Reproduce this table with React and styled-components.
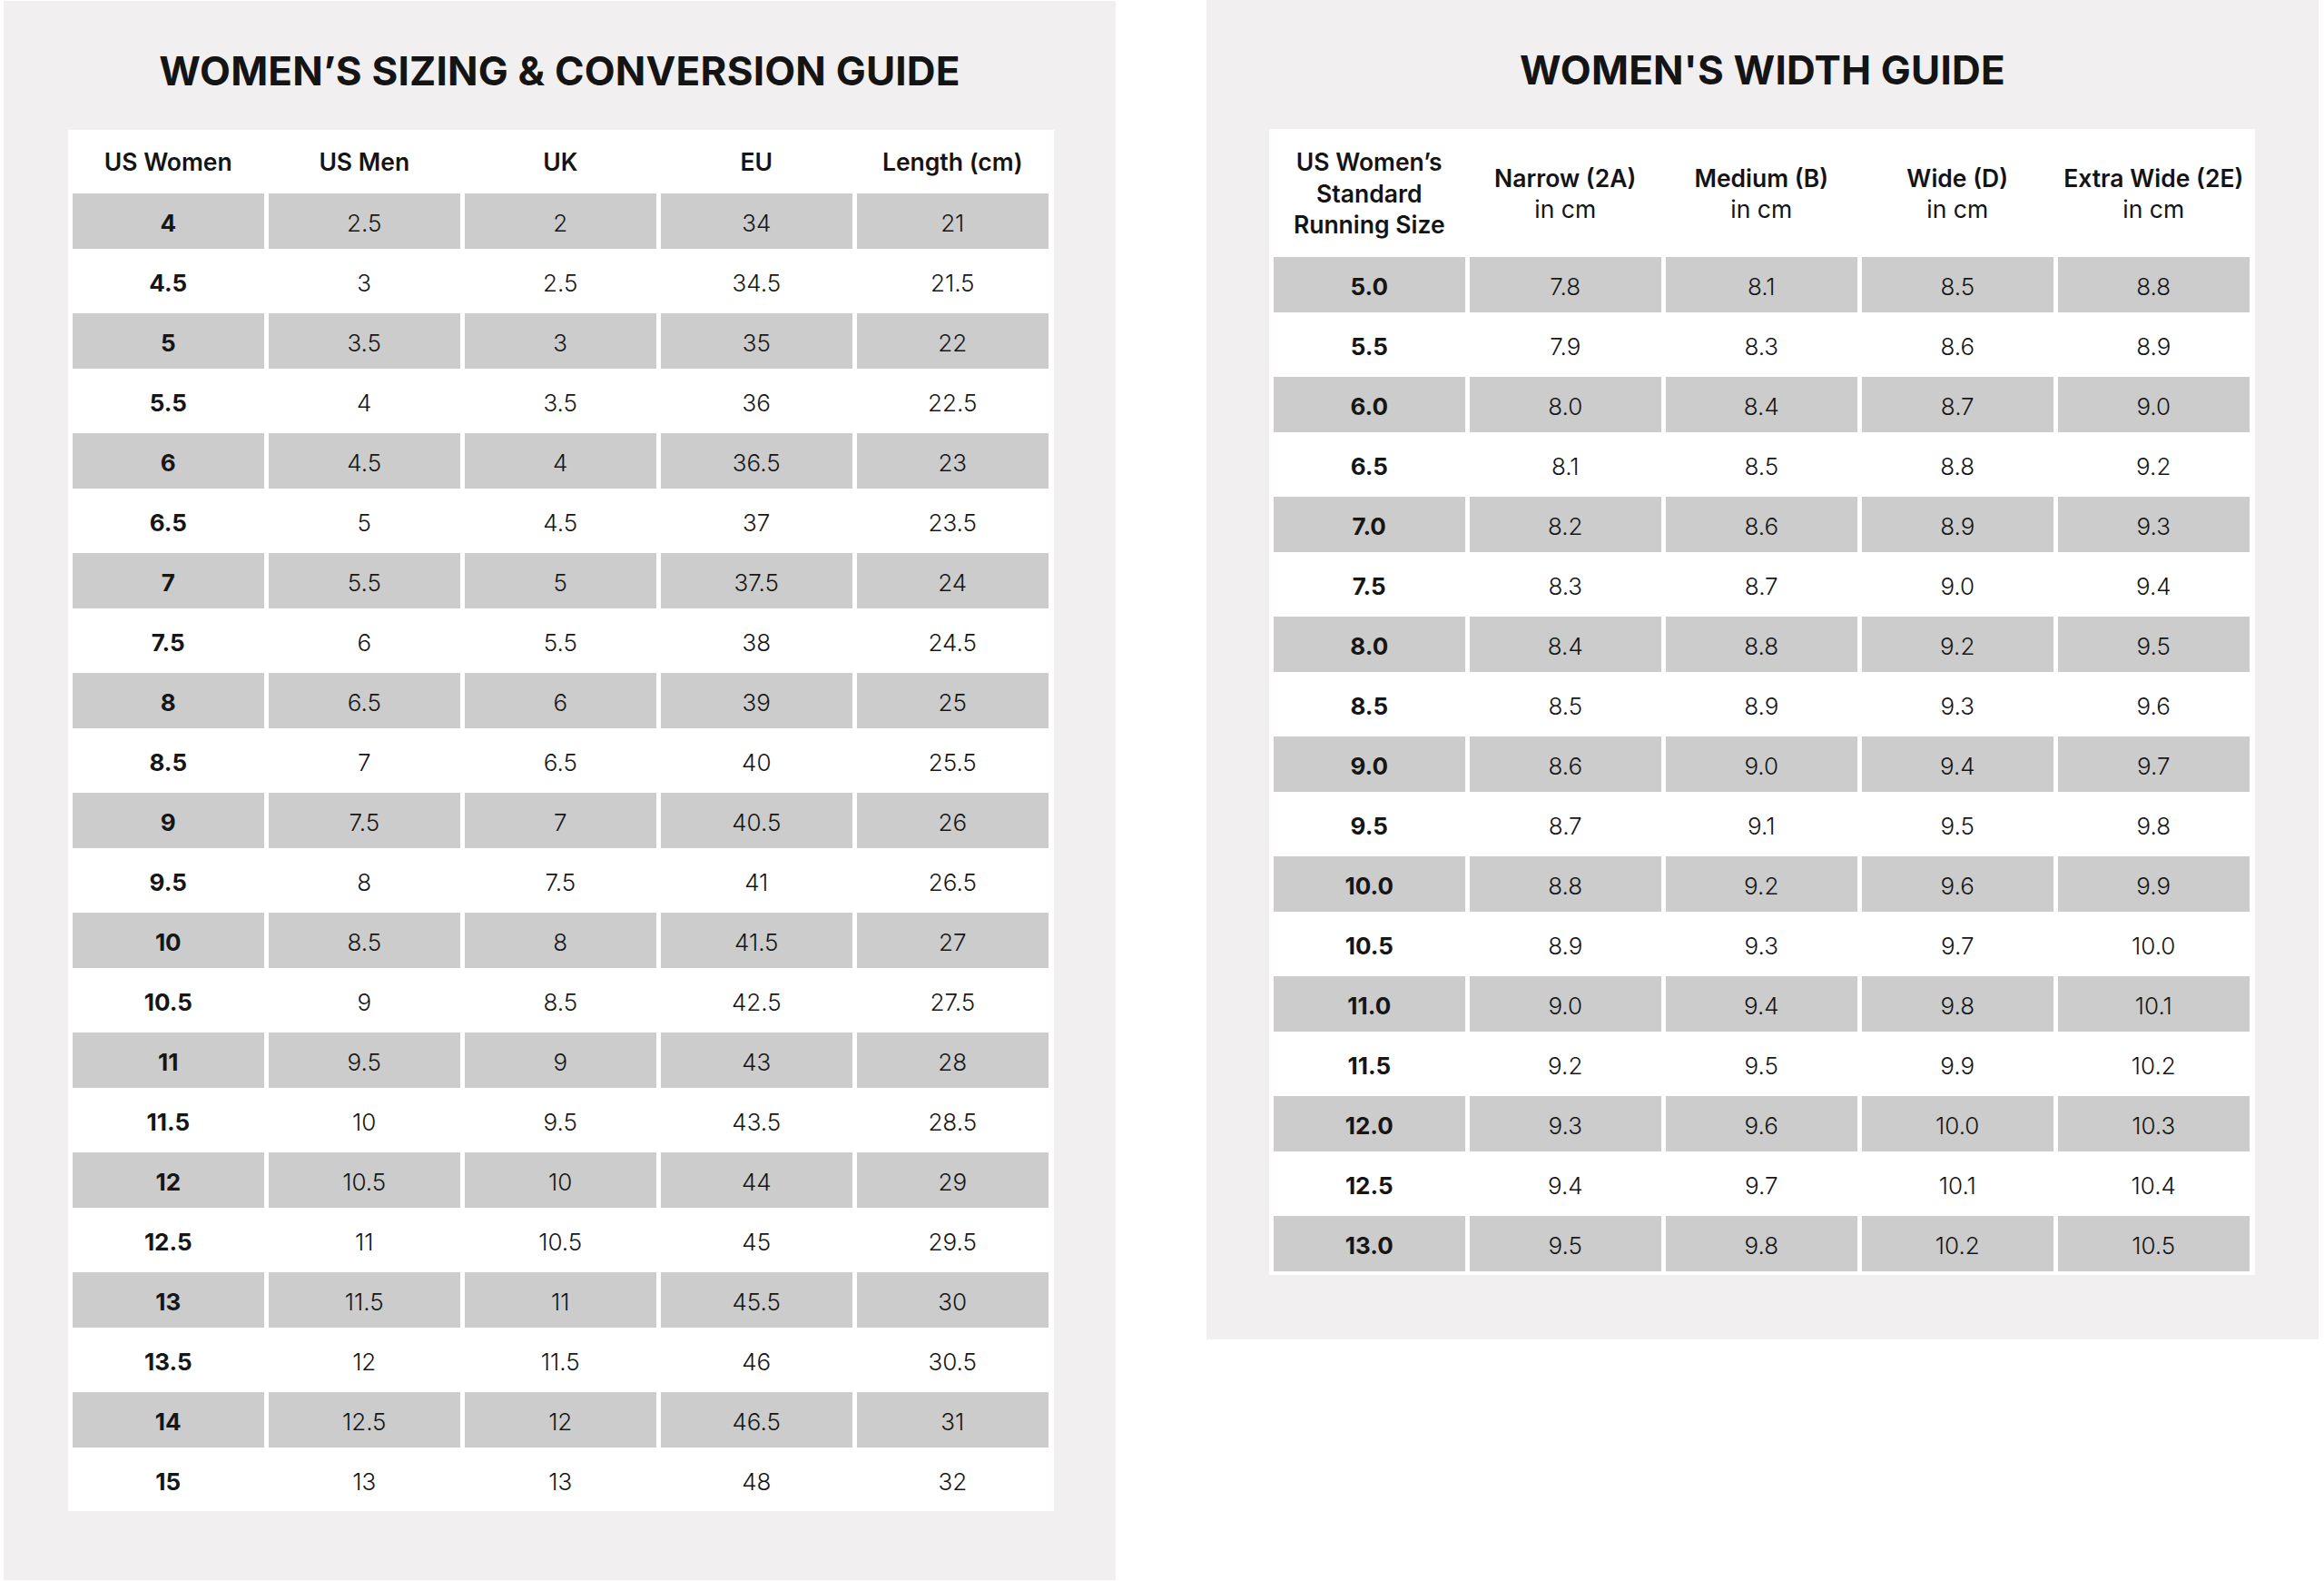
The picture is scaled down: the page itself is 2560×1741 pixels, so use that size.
import React from 'react'
import styled, { createGlobalStyle } from 'styled-components'

const GlobalStyle = createGlobalStyle`
  html, body {
    margin: 0;
    padding: 0;
    background: #ffffff;
  }
  body {
    font-family: Inter, "Open Sans", "Liberation Sans", sans-serif;
    color: #141414;
  }
`

const sizing = [
  ['4', '2.5', '2', '34', '21'],
  ['4.5', '3', '2.5', '34.5', '21.5'],
  ['5', '3.5', '3', '35', '22'],
  ['5.5', '4', '3.5', '36', '22.5'],
  ['6', '4.5', '4', '36.5', '23'],
  ['6.5', '5', '4.5', '37', '23.5'],
  ['7', '5.5', '5', '37.5', '24'],
  ['7.5', '6', '5.5', '38', '24.5'],
  ['8', '6.5', '6', '39', '25'],
  ['8.5', '7', '6.5', '40', '25.5'],
  ['9', '7.5', '7', '40.5', '26'],
  ['9.5', '8', '7.5', '41', '26.5'],
  ['10', '8.5', '8', '41.5', '27'],
  ['10.5', '9', '8.5', '42.5', '27.5'],
  ['11', '9.5', '9', '43', '28'],
  ['11.5', '10', '9.5', '43.5', '28.5'],
  ['12', '10.5', '10', '44', '29'],
  ['12.5', '11', '10.5', '45', '29.5'],
  ['13', '11.5', '11', '45.5', '30'],
  ['13.5', '12', '11.5', '46', '30.5'],
  ['14', '12.5', '12', '46.5', '31'],
  ['15', '13', '13', '48', '32'],
]

const widths = [
  ['5.0', '7.8', '8.1', '8.5', '8.8'],
  ['5.5', '7.9', '8.3', '8.6', '8.9'],
  ['6.0', '8.0', '8.4', '8.7', '9.0'],
  ['6.5', '8.1', '8.5', '8.8', '9.2'],
  ['7.0', '8.2', '8.6', '8.9', '9.3'],
  ['7.5', '8.3', '8.7', '9.0', '9.4'],
  ['8.0', '8.4', '8.8', '9.2', '9.5'],
  ['8.5', '8.5', '8.9', '9.3', '9.6'],
  ['9.0', '8.6', '9.0', '9.4', '9.7'],
  ['9.5', '8.7', '9.1', '9.5', '9.8'],
  ['10.0', '8.8', '9.2', '9.6', '9.9'],
  ['10.5', '8.9', '9.3', '9.7', '10.0'],
  ['11.0', '9.0', '9.4', '9.8', '10.1'],
  ['11.5', '9.2', '9.5', '9.9', '10.2'],
  ['12.0', '9.3', '9.6', '10.0', '10.3'],
  ['12.5', '9.4', '9.7', '10.1', '10.4'],
  ['13.0', '9.5', '9.8', '10.2', '10.5'],
]

const Page = styled.div`
  display: flex;
  align-items: flex-start;
  gap: 100px;
  padding-left: 4px;
`

const Panel = styled.section`
  width: 1225px;
  box-sizing: border-box;
  margin-top: ${(p) => p.$top}px;
  padding: 0 0 ${(p) => p.$bottom}px ${(p) => p.$left}px;
  background: #f2eff0;
`

const Title = styled.h1`
  margin: 0;
  height: 142px;
  box-sizing: border-box;
  padding-top: 55px;
  padding-right: ${(p) => p.$offset}px;
  font-size: 44px;
  line-height: 44px;
  font-weight: 700;
  text-align: center;
  color: #141414;
  letter-spacing: 0.2px;
`

const Card = styled.div`
  width: 1086px;
  box-sizing: border-box;
  background: #ffffff;
  padding: 0 5px 4px 5px;
  display: flex;
  flex-direction: column;
  gap: 5px;
`

const HeadRow = styled.div`
  display: grid;
  grid-template-columns: repeat(5, 210.5px);
  column-gap: 5.5px;
  height: ${(p) => p.$h}px;
  box-sizing: border-box;
  padding-top: ${(p) => p.$pt || 0}px;
`

const Body = styled.div`
  display: grid;
  grid-template-columns: repeat(5, 210.5px);
  grid-auto-rows: 61px;
  column-gap: 5.5px;
  row-gap: 5px;
`

const HeadCell = styled.div`
  display: flex;
  flex-direction: column;
  align-items: center;
  justify-content: center;
  text-align: center;
  font-size: 26.5px;
  line-height: 34.5px;
  font-weight: 600;
  color: #141414;
`

const Sub = styled.span`
  font-weight: 400;
`

const Cell = styled.div`
  display: flex;
  align-items: center;
  justify-content: center;
  padding-top: 3px;
  box-sizing: border-box;
  background: ${(p) => (p.$shade ? '#cccccc' : '#ffffff')};
  font-size: 26px;
  font-weight: ${(p) => (p.$bold ? 700 : 300)};
  color: #161616;
`

function DataRows({ rows }) {
  return (
    <Body>
      {rows.map((row, i) =>
        row.map((v, j) => (
          <Cell key={i + '-' + j} $shade={i % 2 === 0} $bold={j === 0}>
            {v}
          </Cell>
        ))
      )}
    </Body>
  )
}

export default function App() {
  return (
    <>
      <GlobalStyle />
      <Page>
        <Panel $top={1} $bottom={76} $left={71}>
          <Title $offset={71}>WOMEN’S SIZING &amp; CONVERSION GUIDE</Title>
          <Card>
            <HeadRow $h={65} $pt={6}>
              <HeadCell>US Women</HeadCell>
              <HeadCell>US Men</HeadCell>
              <HeadCell>UK</HeadCell>
              <HeadCell>EU</HeadCell>
              <HeadCell>Length (cm)</HeadCell>
            </HeadRow>
            <DataRows rows={sizing} />
          </Card>
        </Panel>
        <Panel $top={0} $bottom={71} $left={69}>
          <Title $offset={69}>WOMEN'S WIDTH GUIDE</Title>
          <Card>
            <HeadRow $h={136} $pt={6}>
              <HeadCell>
                US Women’s
                <br />
                Standard
                <br />
                Running Size
              </HeadCell>
              <HeadCell>
                Narrow (2A)
                <Sub>in cm</Sub>
              </HeadCell>
              <HeadCell>
                Medium (B)
                <Sub>in cm</Sub>
              </HeadCell>
              <HeadCell>
                Wide (D)
                <Sub>in cm</Sub>
              </HeadCell>
              <HeadCell>
                Extra Wide (2E)
                <Sub>in cm</Sub>
              </HeadCell>
            </HeadRow>
            <DataRows rows={widths} />
          </Card>
        </Panel>
      </Page>
    </>
  )
}
